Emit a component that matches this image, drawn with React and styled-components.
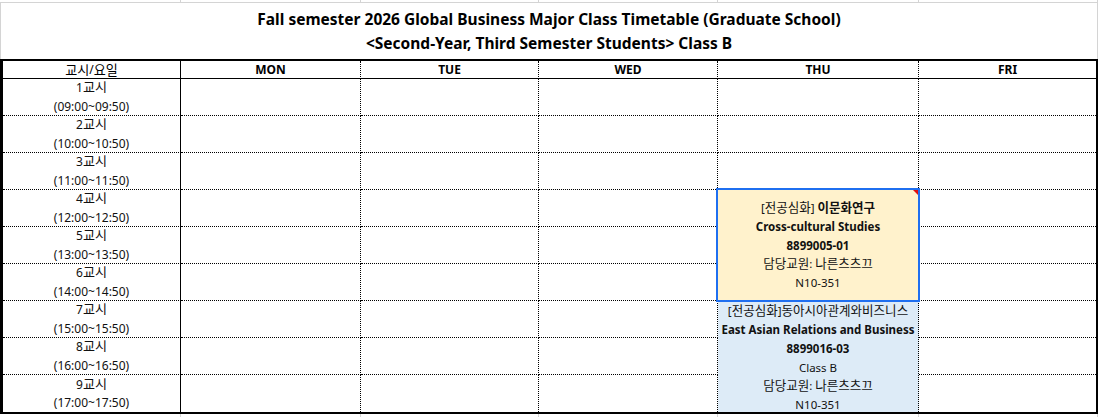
import React from 'react'
import styled, { createGlobalStyle } from 'styled-components'

const GlobalStyle = createGlobalStyle`
  body {
    margin: 0;
    background: #fff;
    font-family: "Noto Sans", "Noto Sans CJK KR", sans-serif;
    color: #111;
  }
`

const COLS = '178px 180px 178px 179px 201px 1fr'
const DAYS = ['MON', 'TUE', 'WED', 'THU', 'FRI']
const PERIODS = [
  ['1', '(09:00~09:50)'],
  ['2', '(10:00~10:50)'],
  ['3', '(11:00~11:50)'],
  ['4', '(12:00~12:50)'],
  ['5', '(13:00~13:50)'],
  ['6', '(14:00~14:50)'],
  ['7', '(15:00~15:50)'],
  ['8', '(16:00~16:50)'],
  ['9', '(17:00~17:50)'],
]

const Sheet = styled.div`
  width: 1100px;
  height: 417px;
  overflow: hidden;
`

const Strip = styled.div`
  display: grid;
  grid-template-columns: ${COLS};
  width: 1098px;
  height: ${p => p.$h}px;
  padding-left: 3px;
  box-sizing: border-box;
  border-bottom: ${p => (p.$top ? '1px solid #d4d4d4' : 'none')};
`

const StripCell = styled.div`
  border-right: 1px solid #d4d4d4;
`

const Title = styled.div`
  height: 56px;
  width: 1098px;
  box-sizing: border-box;
  border-left: 1px solid #d4d4d4;
  border-right: 1px solid #d4d4d4;
  display: flex;
  flex-direction: column;
  align-items: center;
  justify-content: center;
  font-size: 15.5px;
  font-weight: 700;
  line-height: 24px;
  color: #000;
`

const Table = styled.div`
  display: grid;
  grid-template-columns: ${COLS};
  grid-template-rows: 18px repeat(9, 37px);
  width: 1098px;
  box-sizing: border-box;
  border: 2px solid #000;
  border-left-width: 3px;
`

const HeadCell = styled.div`
  display: flex;
  align-items: center;
  justify-content: center;
  font-size: 12px;
  font-weight: ${p => (p.$bold ? 700 : 400)};
  border-bottom: 1px solid #000;
  border-right: ${p => (p.$last ? 'none' : p.$first ? '1px solid #000' : '1px dotted #000')};
  color: #000;
`

const Cell = styled.div`
  border-bottom: ${p => (p.$lastRow ? 'none' : '1px dotted #000')};
  border-right: ${p => (p.$last ? 'none' : p.$first ? '1px solid #000' : '1px dotted #000')};
`

const PeriodCell = styled(Cell)`
  display: flex;
  flex-direction: column;
  align-items: center;
  justify-content: center;
  font-size: 12px;
  line-height: 18.5px;
`

// Hangul runs a little larger, as in the sheet's font
const Ko = styled.span`
  font-size: 1.09em;
`

const Course = styled.div`
  grid-row: span 3;
  display: flex;
  flex-direction: column;
  align-items: center;
  justify-content: center;
  overflow: hidden;
  font-size: 11.5px;
  line-height: 18.75px;
  white-space: nowrap;
  position: relative;
  box-sizing: border-box;
  padding-top: ${p => p.$pad || 0}px;
  background: ${p => (p.$tone === 'yellow' ? '#fff2cc' : '#ddebf7')};
  ${p =>
    p.$selected
      ? `
    z-index: 1;
    margin: -2px -1px -1px -2px;
    border: 2px solid #1f6ff0;
  `
      : `
    border-right: 1px dotted #000;
  `}
`

const CommentMark = styled.span`
  position: absolute;
  top: 0;
  right: 0;
  width: 0;
  height: 0;
  border-top: 5px solid #e01010;
  border-left: 5px solid transparent;
`

const Line = styled.div`
  font-weight: ${p => (p.$bold ? 700 : 400)};
`

const Strong = styled.span`
  font-weight: 700;
`

const cards = {
  3: (
    <Course key="c1" $tone="yellow" $selected $pad={2}>
      <CommentMark />
      <Line>[<Ko>전공심화</Ko>] <Strong><Ko>이문화연구</Ko></Strong></Line>
      <Line $bold>Cross-cultural Studies</Line>
      <Line $bold>8899005-01</Line>
      <Line><Ko>담당교원</Ko>: <Ko>나른츠츠끄</Ko></Line>
      <Line>N10-351</Line>
    </Course>
  ),
  6: (
    <Course key="c2" $tone="blue" $pad={4}>
      <Line>[<Ko>전공심화</Ko>]<Ko>동아시아관계와비즈니스</Ko></Line>
      <Line $bold>East Asian Relations and Business</Line>
      <Line $bold>8899016-03</Line>
      <Line>Class B</Line>
      <Line><Ko>담당교원</Ko>: <Ko>나른츠츠끄</Ko></Line>
      <Line>N10-351</Line>
    </Course>
  ),
}

const covered = i => (i >= 3 && i <= 8)

const App = () => {
  return (
    <Sheet>
      <GlobalStyle />
      <Strip $h={3} $top>
        {Array.from({ length: 6 }).map((_, i) => <StripCell key={i} />)}
      </Strip>
      <Title>
        <div>Fall semester 2026 Global Business Major Class Timetable (Graduate School)</div>
        <div>&lt;Second-Year, Third Semester Students&gt; Class B</div>
      </Title>
      <Table>
        <HeadCell $first><Ko>교시</Ko>/<Ko>요일</Ko></HeadCell>
        {DAYS.map((d, i) => (
          <HeadCell key={d} $bold $last={i === DAYS.length - 1}>{d}</HeadCell>
        ))}
        {PERIODS.map(([n, t], r) => {
          const lastRow = r === PERIODS.length - 1
          return (
            <React.Fragment key={n}>
              <PeriodCell $first $lastRow={lastRow}>
                <div>{n}<Ko>교시</Ko></div>
                <div>{t}</div>
              </PeriodCell>
              {DAYS.map((d, c) => {
                if (d === 'THU') {
                  if (cards[r]) return cards[r]
                  if (covered(r)) return null
                }
                return <Cell key={d} $lastRow={lastRow} $last={c === DAYS.length - 1} />
              })}
            </React.Fragment>
          )
        })}
      </Table>
      <Strip $h={4}>
        {Array.from({ length: 6 }).map((_, i) => <StripCell key={i} />)}
      </Strip>
    </Sheet>
  )
}

export default App
